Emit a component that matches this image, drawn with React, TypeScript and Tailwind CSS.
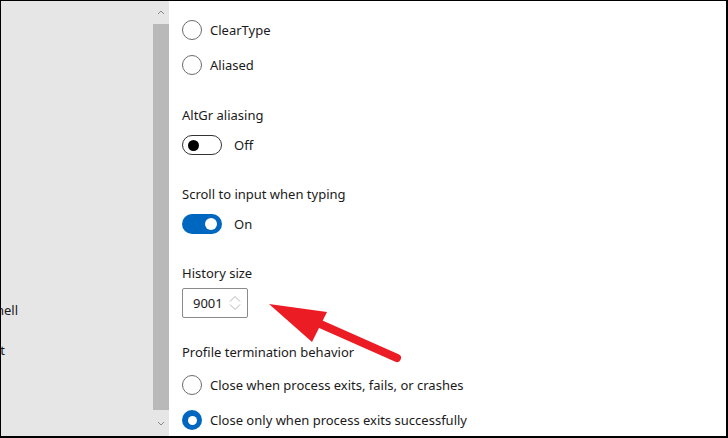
import React from 'react';

const font = { fontFamily: '"Noto Sans", "Open Sans", sans-serif' };

function Radio({ checked, label }: { checked?: boolean; label: string }) {
  return (
    <div className="h-[30px] flex items-center gap-[8px]">
      {checked ? (
        <span className="w-[20px] h-[20px] rounded-full bg-[#0067c0] flex items-center justify-center">
          <span className="w-[9px] h-[9px] rounded-full bg-white" />
        </span>
      ) : (
        <span className="w-[20px] h-[20px] rounded-full border border-[#6b6b6b] bg-white" />
      )}
      <span className="text-[13px] text-[#1a1a1a] pt-[2px]">{label}</span>
    </div>
  );
}

function Toggle({ on }: { on?: boolean }) {
  return (
    <div className="h-[30px] flex items-center gap-[12px]">
      {on ? (
        <span className="w-[40px] h-[20px] rounded-full bg-[#0067c0] flex items-center justify-end px-[5px]">
          <span className="w-[12px] h-[12px] rounded-full bg-white" />
        </span>
      ) : (
        <span className="w-[40px] h-[20px] rounded-full border border-[#333] flex items-center px-[5px]">
          <span className="w-[11px] h-[11px] rounded-full bg-black" />
        </span>
      )}
      <span className="text-[13px] text-[#1a1a1a] pt-[2px]">{on ? 'On' : 'Off'}</span>
    </div>
  );
}

function Label({ children, className }: { children: React.ReactNode; className?: string }) {
  return (
    <div className={`h-[20px] pt-[2px] flex items-center text-[13px] text-[#1a1a1a] ${className ?? ''}`}>
      {children}
    </div>
  );
}

export default function App() {
  return (
    <div
      style={font}
      className="w-[728px] h-[438px] border-t border-l border-r-2 border-b-2 border-black flex overflow-hidden bg-white"
    >
      {/* nav pane, scrolled off to the left */}
      <div className="w-[168px] h-full bg-[#e6e6e6] flex">
        <div className="flex-1 text-[13px] text-[#1a1a1a]">
          <div className="mt-[300px] w-[17px] h-[20px] flex items-center justify-end overflow-hidden whitespace-nowrap">
            Windows PowerShell
          </div>
          <div className="mt-[20px] w-[4px] h-[20px] flex items-center justify-end overflow-hidden whitespace-nowrap">
            Command Prompt
          </div>
        </div>
        <div className="w-[16px] h-full flex flex-col items-center">
          <div className="h-[23px] w-full flex items-center justify-center">
            <svg width="8" height="5" viewBox="0 0 8 5">
              <path d="M1 4 L4 1 L7 4" fill="none" stroke="#8a8a8a" strokeWidth="1" />
            </svg>
          </div>
          <div className="w-full h-[386px] bg-[#b9b9b9]" />
          <div className="flex-1 w-full flex items-center justify-center">
            <svg width="8" height="5" viewBox="0 0 8 5">
              <path d="M1 1 L4 4 L7 1" fill="none" stroke="#8a8a8a" strokeWidth="1" />
            </svg>
          </div>
        </div>
      </div>

      {/* settings */}
      <div className="relative flex-1 h-full pl-[13px] flex flex-col">
        <div className="mt-[14px]">
          <Radio label="ClearType" />
        </div>
        <div className="mt-[5px]">
          <Radio label="Aliased" />
        </div>
        <Label className="mt-[25px]">AltGr aliasing</Label>
        <div className="mt-[5px]">
          <Toggle />
        </div>
        <Label className="mt-[24px]">Scroll to input when typing</Label>
        <div className="mt-[5px]">
          <Toggle on />
        </div>
        <Label className="mt-[24px]">History size</Label>
        <div className="mt-[5px] w-[66px] h-[30px] border border-[#8a8a8a] rounded-[2px] flex items-center pl-[10px] pr-[6px] justify-between">
          <span className="text-[13px] text-[#1a1a1a] pt-[2px]">9001</span>
          <svg width="12" height="16" viewBox="0 0 12 16">
            <path d="M1 6.5 L6 1.5 L11 6.5" fill="none" stroke="#b5b5b5" strokeWidth="1" />
            <path d="M1 9.5 L6 14.5 L11 9.5" fill="none" stroke="#b5b5b5" strokeWidth="1" />
          </svg>
        </div>
        <Label className="mt-[24px]">Profile termination behavior</Label>
        <div className="mt-[8px]">
          <Radio label="Close when process exits, fails, or crashes" />
        </div>
        <div className="mt-[5px]">
          <Radio checked label="Close only when process exits successfully" />
        </div>

        {/* annotation arrow */}
        <svg className="absolute left-0 top-0 pointer-events-none" width="557" height="435" viewBox="169 1 557 435">
          <line x1="397" y1="358" x2="318" y2="323" stroke="#ec1c24" strokeWidth="8" strokeLinecap="round" />
          <polygon points="269,304 327,312 312,342" fill="#ec1c24" />
        </svg>
      </div>
    </div>
  );
}
